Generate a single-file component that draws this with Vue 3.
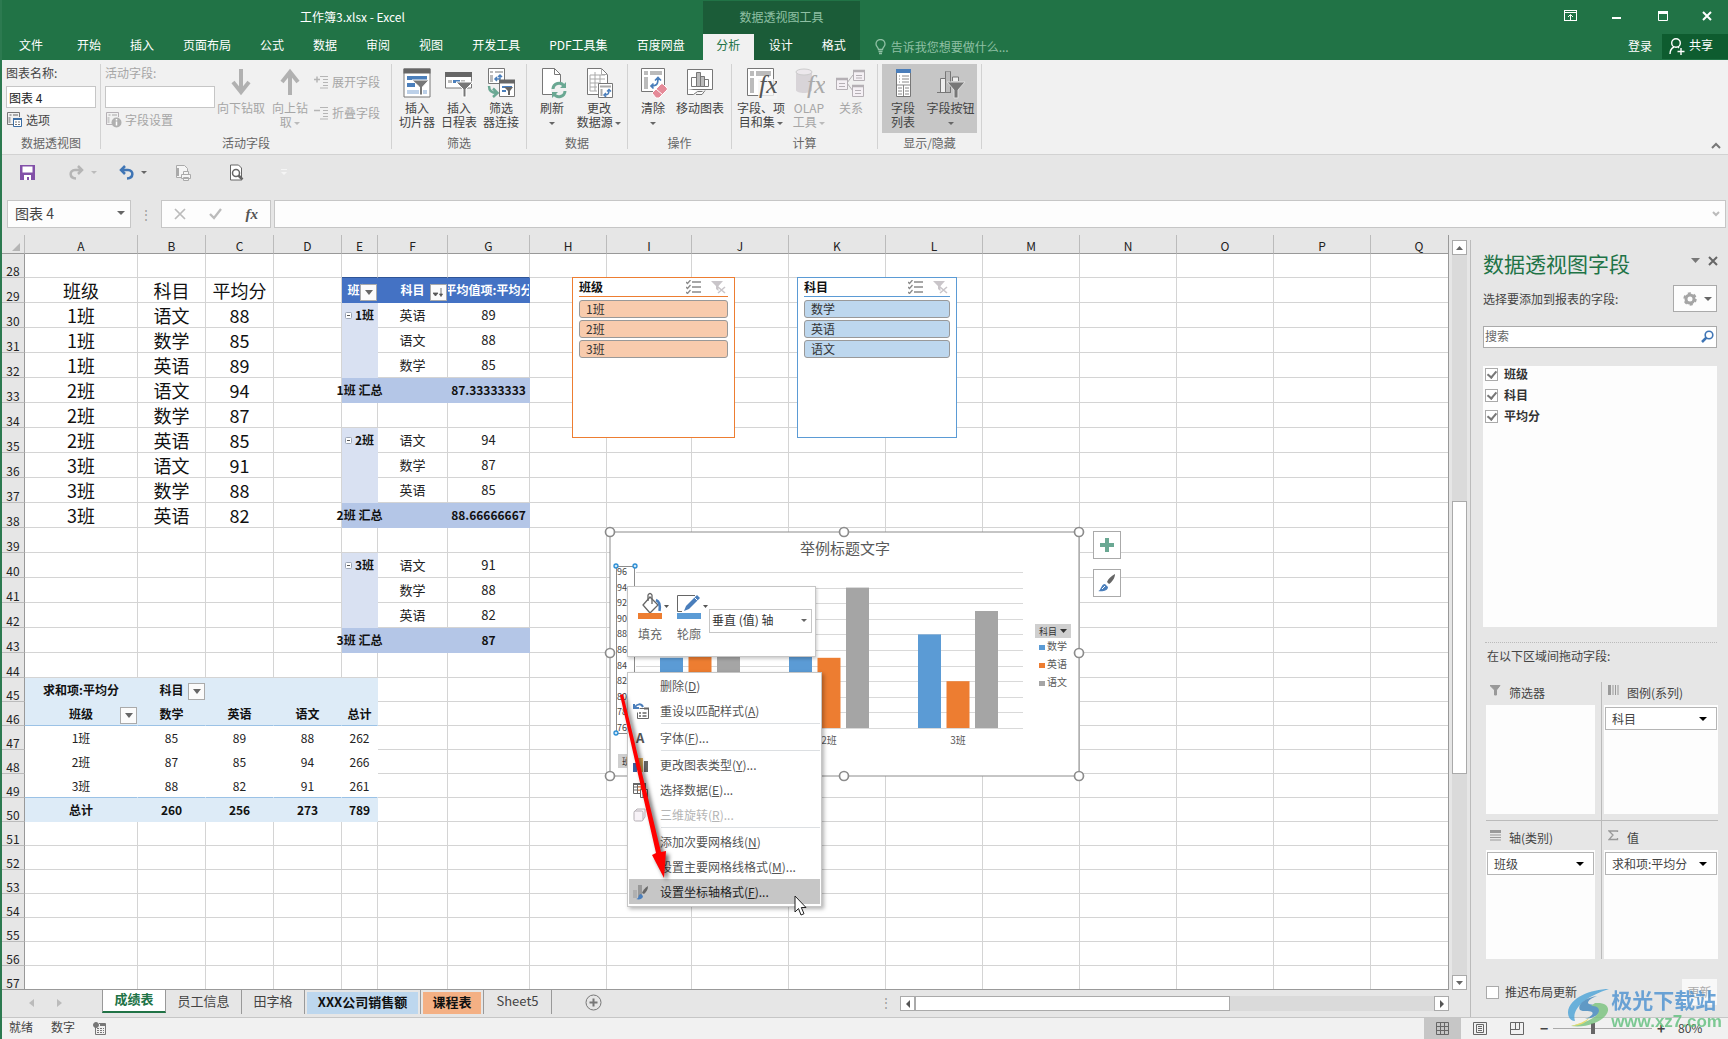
<script setup>
const tabs = ['文件', '开始', '插入', '页面布局', '公式', '数据', '审阅', '视图', '开发工具', 'PDF工具集', '百度网盘']

const columns = [
  ['A', 113], ['B', 68], ['C', 68], ['D', 68], ['E', 36], ['F', 70], ['G', 82], ['H', 77], ['I', 85],
  ['J', 97], ['K', 97], ['L', 97], ['M', 97], ['N', 97], ['O', 97], ['P', 97], ['Q', 97]
]
const gridWidth = 23 + columns.reduce((sum, c) => sum + c[1], 0)

const cells = {}
function put(ref, text, cls = '', extra = {}) {
  cells[ref] = { text, cls, ...extra }
}
function fillRange(cols, row, cls) {
  for (const c of cols) if (!cells[c + row]) put(c + row, '', cls)
}

// Source data
const scores = [
  ['班级', '科目', '平均分'],
  ['1班', '语文', 88], ['1班', '数学', 85], ['1班', '英语', 89],
  ['2班', '语文', 94], ['2班', '数学', 87], ['2班', '英语', 85],
  ['3班', '语文', 91], ['3班', '数学', 88], ['3班', '英语', 82]
]
scores.forEach((line, i) => line.forEach((v, j) => put('ABC'[j] + (29 + i), v, 'src')))

// Pivot with subtotals
put('E29', '班级', 'head clip', { filter: 'drop' })
put('F29', '科目', 'head', { filter: 'sort' })
put('G29', '平均值项:平均分', 'head clip')
for (const c of 'EFG') put(c + 28, '', 'above-head')
const groups = [
  [30, '1班', [['英语', 89], ['语文', 88], ['数学', 85]], '87.33333333'],
  [35, '2班', [['语文', 94], ['数学', 87], ['英语', 85]], '88.66666667'],
  [40, '3班', [['语文', 91], ['数学', 88], ['英语', 82]], '87']
]
for (const [start, name, items, total] of groups) {
  put('E' + start, name, 'outer', { expand: true })
  items.forEach(([subject, value], i) => {
    fillRange('E', start + i, 'outer')
    put('F' + (start + i), subject, 'item')
    put('G' + (start + i), value, 'item')
  })
  const end = start + items.length
  put('E' + end, name + ' 汇总', 'subtotal')
  put('F' + end, '', 'subtotal')
  put('G' + end, total, 'subtotal')
}

// Cross-table pivot
put('A45', '求和项:平均分', 'cross')
put('B45', '科目', 'cross', { filter: 'drop' })
fillRange('CDE', 45, 'cross')
const cross = [
  [46, ['班级', '数学', '英语', '语文', '总计'], 'cross line'],
  [47, ['1班', 85, 89, 88, 262], 'plain'],
  [48, ['2班', 87, 85, 94, 266], 'plain'],
  [49, ['3班', 88, 82, 91, 261], 'plain line'],
  [50, ['总计', 260, 256, 273, 789], 'cross']
]
for (const [row, values, cls] of cross) values.forEach((v, i) => put('ABCDE'[i] + row, v, cls))
cells.A46.filter = 'drop'

const rows = Array.from({ length: 30 }, (_, i) => 28 + i)

const slicers = [
  { title: '班级', cls: 'orange', items: ['1班', '2班', '3班'] },
  { title: '科目', cls: 'blue', items: ['数学', '英语', '语文'] }
]

// Chart geometry
const axis = [96, 94, 92, 90, 88, 86, 84, 82, 80, 78, 76]
const yOf = v => 728 - (v - 76) * 7.8
const bars = []
const series = [
  { name: '数学', color: '#5b9bd5', values: [85, 87, 88] },
  { name: '英语', color: '#ed7d31', values: [89, 85, 82] },
  { name: '语文', color: '#a5a5a5', values: [88, 94, 91] }
]
series.forEach((s, j) => s.values.forEach((v, i) => {
  bars.push({ x: 660 + i * 129 + j * 28.5, y: yOf(v), h: 728 - yOf(v), color: s.color })
}))
const handles = [[610, 532], [844, 532], [1079, 532], [610, 653], [1079, 653], [610, 776], [844, 776], [1079, 776]]
const axisHandles = [[616, 566], [635, 566], [616, 733]]

const menu = [
  { text: '删除', key: 'D' },
  { text: '重设以匹配样式', key: 'A', icon: 'reset' },
  { sep: true },
  { text: '字体', key: 'F', tail: '...', icon: 'font' },
  { sep: true },
  { text: '更改图表类型', key: 'Y', tail: '...', icon: 'chart' },
  { text: '选择数据', key: 'E', tail: '...', icon: 'data' },
  { text: '三维旋转', key: 'R', tail: '...', icon: 'cube', off: true },
  { sep: true },
  { text: '添加次要网格线', key: 'N' },
  { text: '设置主要网格线格式', key: 'M', tail: '...' },
  { text: '设置坐标轴格式', key: 'F', tail: '...', icon: 'format', active: true }
]

const fields = ['班级', '科目', '平均分']
const zones = [
  { title: '筛选器', icon: 'funnel' },
  { title: '图例(系列)', icon: 'cols', field: '科目' },
  { title: '轴(类别)', icon: 'rows', field: '班级' },
  { title: '值', icon: 'sum', field: '求和项:平均分' }
]
</script>

<template>
  <div class="app">
    <header class="top">
      <div class="title-row">
        <div class="doc-title">工作簿3.xlsx - Excel</div>
        <div class="ctx-title">数据透视图工具</div>
        <div class="win-buttons">
          <button aria-label="功能区显示选项"><svg width="14" height="12" viewBox="0 0 14 12" fill="none" stroke="#fff"><rect x="0.5" y="0.5" width="12" height="10" /><path d="M0 2.5h13M6.5 10V5M4 7l2.500-2.500L9 7" /></svg></button>
          <button aria-label="最小化"><svg width="10" height="12" viewBox="0 0 10 12"><path d="M0 7h9v2H0z" fill="#fff" /></svg></button>
          <button aria-label="最大化"><svg width="10" height="12" viewBox="0 0 10 12"><path d="M0.500 1.500h9v9h-9z" fill="none" stroke="#fff" /><path d="M0 1h10v3H0z" fill="#fff" /></svg></button>
          <button aria-label="关闭"><svg width="10" height="10" viewBox="0 0 10 10"><path d="M1 1l8 8M9 1l-8 8" stroke="#fff" stroke-width="2" /></svg></button>
        </div>
      </div>
      <nav class="tab-row">
        <button v-for="t in tabs" :key="t" class="tab" :class="{ file: t === '文件' }">{{ t }}</button>
        <div class="ctx-tabs">
          <button class="tab active">分析</button>
          <button class="tab">设计</button>
          <button class="tab">格式</button>
        </div>
        <div class="tell-me">
          <svg width="11" height="16" viewBox="0 0 11 16" fill="none" stroke="#8fc0a4" stroke-width="1.300"><path d="M3.500 10.500C3.500 8.500 1 7.500 1 5a4.500 4.500 0 0 1 9 0c0 2.500-2.500 3.500-2.500 5.500zM3.500 12.500h4M4 14.500h3" /></svg>
          <span>告诉我您想要做什么...</span>
        </div>
        <button class="login">登录</button>
        <button class="share">
          <svg width="16" height="17" viewBox="0 0 16 17" fill="none" stroke="#fff" stroke-width="1.400"><circle cx="7" cy="5" r="4.300" /><path d="M1 16c0-4 2-6 4-7M9 9l1 1M12 10v7M8.500 13.500h7" /></svg>
          <span>共享</span>
        </button>
      </nav>
    </header>

    <section class="ribbon">
      <div class="group g1">
        <div class="group-body stack">
          <label for="chart-name">图表名称:</label>
          <input id="chart-name" value="图表 4">
          <button class="small">
            <svg width="17" height="17" viewBox="0 0 17 17" fill="none" stroke="#777"><path d="M7 13.500H1.500v-12h12V6" /><path d="M3.500 4h2M7 4h5M3.500 6v6" stroke="#aaa" stroke-width="2" /><path d="M7.500 7.500h8v8h-8z" fill="#fff" stroke="#3c6ea5" /><path d="M7 8h9" stroke="#3c6ea5" stroke-width="2" /><path d="M9 11h2M9 13.500h2M12 11h2M12 13.500h2" /></svg>选项
          </button>
        </div>
        <div class="group-name">数据透视图</div>
      </div>

      <div class="group g2">
        <div class="group-body">
          <div class="stack off">
            <label for="active-field">活动字段:</label>
            <input id="active-field" class="wide" value="">
            <button class="small">
              <svg width="17" height="17" viewBox="0 0 17 17" fill="none" stroke="#b5b0b5"><path d="M7 13.500H1.500v-12h12V6" /><path d="M3.500 4h2M7 4h5M3.500 6v6" stroke="#ccc" stroke-width="2" /><circle cx="11.500" cy="11.500" r="5" fill="#b0b0b0" stroke="none" /><path d="M11.500 8v1.500M11.500 10.500v4" stroke="#fff" stroke-width="1.500" /></svg>字段设置
            </button>
          </div>
          <button class="big w50 off"><svg width="32" height="32" viewBox="0 0 32 32" fill="none" stroke="#b1b1b1" stroke-width="4"><path d="M16 2v23M8 15l8 10 8-10" /></svg><span>向下钻取</span></button>
          <button class="big w48 off"><svg width="32" height="32" viewBox="0 0 32 32" fill="none" stroke="#b1b1b1" stroke-width="4"><path d="M16 28V5M8 15l8-10 8 10" /></svg><span>向上钻</span><span>取 <i class="caret"></i></span></button>
          <div class="pair off">
            <button class="small"><svg width="15" height="14" viewBox="0 0 15 14" stroke="#b5b5b5" fill="none"><path d="M0 4.500h6M3 1.500v6" stroke-width="1.500" /><path d="M6 1.500h8M9 4.500h5M9 7.500h5M9 10.500h5M6 13h8" /></svg>展开字段</button>
            <button class="small"><svg width="15" height="14" viewBox="0 0 15 14" stroke="#b5b5b5" fill="none"><path d="M0 4.500h6" stroke-width="1.500" /><path d="M6 1.500h8M9 4.500h5M9 7.500h5M9 10.500h5M6 13h8" /></svg>折叠字段</button>
          </div>
        </div>
        <div class="group-name">活动字段</div>
      </div>

      <div class="group g3">
        <div class="group-body">
          <button class="big w42"><svg width="32" height="32" viewBox="0 0 32 32" fill="none"><path d="M3 2h26v28H3z" fill="#fff" stroke="#777" /><path d="M2.500 1.500h27v5h-27z" fill="#666" /><path d="M6 9h20v4H6zM6 16h8v4H6z" fill="#4a7ebb" /><path d="M6 23h20v4H6z" fill="#bcd0e8" /><path d="M11 13h17l-6.500 7v8h-3v-8z" fill="#777" stroke="#fff" /></svg><span>插入</span><span>切片器</span></button>
          <button class="big w42"><svg width="32" height="32" viewBox="0 0 32 32" fill="none"><path d="M2.500 6h26v15h-26z" fill="#fff" stroke="#777" /><path d="M2 5h27v5H2z" fill="#666" /><path d="M5 13h4v3H5z" fill="#bbb" /><path d="M10 13h7v3h-7z" fill="#4a7ebb" /><path d="M18 13h4v3h-4z" fill="#bbb" /><path d="M13 15h17l-7 7v8h-3v-8z" fill="#777" stroke="#fff" /></svg><span>插入</span><span>日程表</span></button>
          <button class="big w42"><svg width="32" height="32" viewBox="0 0 32 32" fill="none"><path d="M3.500 1.500h16v15h-16z" fill="#fff" stroke="#777" /><path d="M5 4h3v2H5zM10 4h8v2h-8zM5 8h3v7H5z" fill="#bbb" /><path d="M10 12h5V8m-2 2 2-2 2 2M12 10l-2 2 2 2" stroke="#4a7ebb" stroke-width="1.500" /><path d="M14.500 13.500h15v16h-15z" fill="#fff" stroke="#777" /><path d="M14 12.500h16v4H14z" fill="#666" /><path d="M17 19h10v2H17zM17 23h4v2h-4z" fill="#4a7ebb" /><path d="M19 20h9l-3 4v4h-2v-4z" fill="#666" /><path d="M4 19c0 5 3 7 8 7M8 21.500l4.500 4.500L8 30" stroke="#6aa893" stroke-width="2.500" /></svg><span>筛选</span><span>器连接</span></button>
        </div>
        <div class="group-name">筛选</div>
      </div>

      <div class="group g4">
        <div class="group-body">
          <button class="big w42"><svg width="32" height="32" viewBox="0 0 32 32" fill="none"><path d="M6.500 1.500h12l6 6v20h-18z" fill="#fff" stroke="#777" /><path d="M18.500 1.500v6h6" stroke="#777" /><circle cx="23" cy="23" r="8" fill="#f1f1f1" /><path d="M17 22a6 6 0 0 1 11-3M29 24a6 6 0 0 1-11 3" stroke="#6aa893" stroke-width="3" /><path d="M30 15v6h-6zM16 31v-6h6z" fill="#6aa893" /></svg><span>刷新</span><span><i class="caret"></i></span></button>
          <button class="big w52"><svg width="32" height="32" viewBox="0 0 32 32" fill="none"><path d="M4.500 1.500h14l6 6v20h-20z" fill="#fff" stroke="#777" /><path d="M18.500 1.500v6h6M7 8h15M7 12h15M7 16h9M7 20h7M7 24h7M7 8v16M12 5v19M17 8v8" stroke="#aaa" /><path d="M15.500 16.500h14v14h-14z" fill="#fff" stroke="#777" /><path d="M17 19.500h11M18.500 22v7" stroke="#aaa" stroke-width="2" /><path d="M21 28c4 0 5-1 5-5m-2 1.500 2-2 2 2M23 26l-2 2 2 2" stroke="#4a7ebb" stroke-width="1.500" /></svg><span>更改</span><span>数据源 <i class="caret"></i></span></button>
        </div>
        <div class="group-name">数据</div>
      </div>

      <div class="group g5">
        <div class="group-body">
          <button class="big w42"><svg width="32" height="32" viewBox="0 0 32 32" fill="none"><path d="M4.500 1.500h23v23h-23z" fill="#fff" stroke="#777" /><path d="M7 4h4v4H7zM13 4h12v4H13zM7 10h4v12H7z" fill="#bbb" /><path d="M14 19c6 0 7-2 7-8m-3 2.500 3-3 3 3M16.500 16.500 14 19l2.500 2.500" stroke="#4a7ebb" stroke-width="1.700" /><path d="M15 26l9-9q1-1 2 0l4 4q1 1 0 2l-8 8h-3z" fill="#e58a98" stroke="#fff" /><path d="M19 22l7 6" stroke="#fff" /></svg><span>清除</span><span><i class="caret"></i></span></button>
          <button class="big w52"><svg width="32" height="32" viewBox="0 0 32 32" fill="none"><path d="M3.500 2.500h25v20h-25z" fill="#fff" stroke="#777" /><path d="M7.500 10.500h5v9h-5zM20.500 12.500h4v7h-4z" fill="#fff" stroke="#777" /><path d="M12.500 5.500h4v14h-4zM16.500 9.500h4v10h-4z" fill="#bbb" stroke="#777" /><path d="M3.500 22v5.500h6l4-3h5M12 27.500h6l3-4" stroke="#777" fill="#fff" /></svg><span>移动图表</span></button>
        </div>
        <div class="group-name">操作</div>
      </div>

      <div class="group g6">
        <div class="group-body">
          <button class="big w50"><svg width="32" height="32" viewBox="0 0 32 32" fill="none"><path d="M2.500 1.500h26v27h-26z" fill="#fff" stroke="#777" /><path d="M5 4h4v5H5zM11 4h15v5H11zM5 11h4v15H5z" fill="#bbb" /><path d="M13 12h19v20H13z" fill="#f5f5f5" opacity=".8" /><text x="14" y="26" class="fx" fill="#555">fx</text></svg><span>字段、项</span><span>目和集 <i class="caret"></i></span></button>
          <button class="big w46 off"><svg width="32" height="32" viewBox="0 0 32 32" fill="none"><path d="M3 5v18c0 4 16 4 16 0V5z" fill="#d8d4d8" /><ellipse cx="11" cy="5" rx="8" ry="3" fill="#ece8ec" stroke="#ccc" /><text x="14" y="26" class="fx" fill="#aaa">fx</text></svg><span>OLAP</span><span>工具 <i class="caret"></i></span></button>
          <button class="big w38 off"><svg width="32" height="32" viewBox="0 0 32 32" fill="#f5f0f5" stroke="#b5b0b5"><path d="M12 16l6-8M12 16l6 8" /><path d="M1.500 11.500h11v11h-11zM18.500 3.500h11v10h-11zM17.500 18.500h11v11h-11z" /><path d="M1 12h12M18 4h12M17 19h12" stroke-width="2.500" /><path d="M4 16.500h6M4 19.500h6M21 8.500h6M21 11h6M20 23.500h6M20 26.500h6" /></svg><span>关系</span></button>
        </div>
        <div class="group-name">计算</div>
      </div>

      <div class="group g7">
        <div class="group-body">
          <button class="big w42 on"><svg width="32" height="32" viewBox="0 0 32 32" fill="none"><path d="M9.500 2.500h14v27h-14z" fill="#fff" stroke="#777" /><path d="M9 2h15v4H9z" fill="#4a7ebb" /><path d="M12 9h1M15 9h7M12 12h1M15 12h7M12 15h1M15 15h7M10 18h13M16.500 18v11M11 21h4M18 21h4M11 24h4M18 24h4M11 27h4M18 27h4" stroke="#888" /></svg><span>字段</span><span>列表</span></button>
          <button class="big w53 on"><svg width="32" height="32" viewBox="0 0 32 32" fill="none"><path d="M2 25.500h14M5.500 25V11.500h5V25M10.500 25V4.500h5V25M17.500 14v-4h6v4" stroke="#777" fill="#eee" /><path d="M11 4.500h4V25h-4z" fill="#bbb" /><path d="M12 15h18l-7 8v8h-4v-8z" fill="#777" stroke="#ddd" /></svg><span>字段按钮</span><span><i class="caret"></i></span></button>
        </div>
        <div class="group-name">显示/隐藏</div>
      </div>
      <button class="collapse" aria-label="折叠功能区"><svg width="10" height="7" viewBox="0 0 10 7"><path d="M1 6l4-4 4 4" fill="none" stroke="#777" stroke-width="2" /></svg></button>
    </section>

    <section class="qat">
      <button aria-label="保存"><svg width="15" height="15" viewBox="0 0 15 15"><path d="M0 0h15v15H0z" fill="#8250a8" /><path d="M2.500 1.500h10v6h-10zM4 10h7v5H9v-3H7v3H4z" fill="#fff" /></svg></button>
      <button aria-label="重做" class="redo"><svg width="15" height="15" viewBox="0 0 15 15" fill="none" stroke="#b5b5b5" stroke-width="2.500"><path d="M13 5H6C0 5 0 13 7 13.500M9 1l4 4-4 4" /></svg><i class="caret pale"></i></button>
      <button aria-label="撤消" class="undo"><svg width="15" height="15" viewBox="0 0 15 15" fill="none" stroke="#3f75b5" stroke-width="2.500"><path d="M2 5h7c6 0 6 8-1 8.500M6 1L2 5l4 4" /></svg><i class="caret"></i></button>
      <button aria-label="快速打印"><svg width="17" height="17" viewBox="0 0 17 17" fill="#f5f5f5" stroke="#aaa"><path d="M1.500 1.500h8l3 3v9h-11z" /><path d="M3 4v8" stroke-width="2" /><path d="M8.500 7.500h5v3h-5zM6.500 10.500h9v4h-9zM8.500 13.500h5v3h-5z" /></svg></button>
      <button aria-label="打印预览" class="preview"><svg width="15" height="17" viewBox="0 0 15 17" fill="#fff" stroke="#666"><path d="M1.500 1h8l3 3v12h-11z" /><circle cx="7" cy="9" r="3.500" stroke-width="1.500" /><path d="M9.500 11.500l4 4" stroke-width="2.500" /></svg></button>
      <button aria-label="自定义快速访问工具栏" class="preview"><svg width="7" height="7" viewBox="0 0 7 7" fill="#f5f5f5"><path d="M0 0h6v1H0zM0 3h6L3 6z" /></svg></button>
    </section>

    <section class="formula-bar">
      <div class="name-box"><input aria-label="名称框" value="图表 4"><i class="caret big-caret"></i></div>
      <span class="dots">⋮</span>
      <div class="fx-box">
        <svg width="12" height="12" viewBox="0 0 12 12"><path d="M1 1l10 10M11 1L1 11" stroke="#bbb" stroke-width="1.700" /></svg>
        <svg width="13" height="12" viewBox="0 0 13 12"><path d="M1 6l4 4 7-9" stroke="#bbb" stroke-width="2.300" fill="none" /></svg>
        <button class="fx-btn" aria-label="插入函数">fx</button>
      </div>
      <div class="formula"><input aria-label="编辑栏" value=""><svg width="8" height="6" viewBox="0 0 8 6"><path d="M1 1l3 3 3-3" fill="none" stroke="#bbb" stroke-width="2" /></svg></div>
    </section>

    <main class="work">
      <div class="left">
        <div class="sheet-row">
          <div class="sheet">
            <table class="grid" :style="{ width: gridWidth + 'px' }">
              <colgroup><col class="col-head"><col v-for="c in columns" :key="c[0]" :style="{ width: c[1] + 'px' }"></colgroup>
              <thead>
                <tr><th class="corner"><svg width="8" height="8" viewBox="0 0 8 8"><path d="M8 0v8H0z" fill="#b5b5b5" /></svg></th><th v-for="c in columns" :key="c[0]">{{ c[0] }}</th></tr>
              </thead>
              <tbody>
                <tr v-for="r in rows" :key="r" :class="{ tall: r > 28 && r < 45 }">
                  <th scope="row">{{ r }}</th>
                  <td v-for="c in columns" :key="c[0]" :class="cells[c[0] + r]?.cls">
                    <div class="c">
                      <template v-if="cells[c[0] + r]">
                        <svg v-if="cells[c[0] + r].expand" class="expand" width="7" height="7" viewBox="0 0 7 7"><rect x="0.500" y="0.500" width="6" height="6" rx="1" fill="#fff" stroke="#9aa4b4" /><path d="M2 3.500h3" stroke="#555" /></svg>{{ cells[c[0] + r].text }}<button v-if="cells[c[0] + r].filter" class="filter" aria-label="筛选"><svg v-if="cells[c[0] + r].filter === 'drop'" width="8" height="5" viewBox="0 0 8 5"><path d="M0 0h8L4 5z" fill="#666" /></svg><svg v-else width="11" height="10" viewBox="0 0 11 10"><path d="M0 5h5L2.500 8zM8 0v6M6.500 6L8 8.500 9.500 6z" fill="#555" stroke="#555" stroke-width=".8" /></svg></button>
                      </template>
                    </div>
                  </td>
                </tr>
              </tbody>
            </table>

            <div v-for="s in slicers" :key="s.title" class="slicer" :class="s.cls">
              <div class="slicer-head">
                <span>{{ s.title }}</span>
                <svg width="15" height="14" viewBox="0 0 15 14" fill="none" stroke="#8a8a8a" stroke-width="1.300"><path d="M0 2l1.500 1.500L4.500 0M0 7l1.500 1.500L4.500 5M0 12l1.500 1.500L4.500 10M6 2h9M6 7h9M6 12h9" /></svg>
                <svg width="15" height="14" viewBox="0 0 15 14"><path d="M0 1h12L7.500 6v5L5 9V6z" fill="#c9c5c9" /><path d="M7 7l7 6M14 7l-7 6" stroke="#c9c5c9" stroke-width="1.600" /></svg>
              </div>
              <button v-for="i in s.items" :key="i">{{ i }}</button>
            </div>

            <svg class="chart" width="486" height="265" viewBox="602 520 486 265">
              <rect x="610" y="532" width="469" height="244" fill="#fff" stroke="#8c8c8c" />
              <text x="845" y="554" class="chart-title">举例标题文字</text>
              <path v-for="v in axis" :key="v" :d="`M636 ${Math.round(yOf(v)) + 0.5}H1023`" stroke="#d9d9d9" />
              <text v-for="v in axis" :key="'t' + v" x="617" :y="yOf(v) + 3" class="axis">{{ v }}</text>
              <rect v-for="(b, i) in bars" :key="'b' + i" :x="b.x" :y="b.y" width="23" :height="b.h" :fill="b.color" />
              <text x="829" y="744" class="cat">2班</text>
              <text x="958" y="744" class="cat">3班</text>
              <rect x="1035" y="624" width="36" height="14" fill="#cfcfcf" />
              <text x="1039" y="635" class="tag">科目</text>
              <path d="M1060 629h7l-3.500 4z" fill="#333" />
              <g v-for="(s, i) in series" :key="s.name">
                <rect x="1039" :y="645 + i * 18" width="6" height="5" :fill="s.color" />
                <text x="1047" :y="650 + i * 18" class="legend">{{ s.name }}</text>
              </g>
              <rect x="618" y="754" width="36" height="14" fill="#cfcfcf" />
              <text x="622" y="765" class="tag">班级</text>
              <rect x="616.500" y="566.500" width="18" height="167" fill="none" stroke="#8c8c8c" />
              <circle v-for="(h, i) in axisHandles" :key="'a' + i" :cx="h[0]" :cy="h[1]" r="2" fill="#cde6f7" stroke="#2a8dd4" stroke-width="1.300" />
              <circle v-for="(h, i) in handles" :key="'h' + i" :cx="h[0]" :cy="h[1]" r="4.500" fill="#fff" stroke="#8c8c8c" stroke-width="1.700" />
            </svg>

            <div class="chart-tools">
              <button aria-label="图表元素"><svg width="14" height="14" viewBox="0 0 14 14"><path d="M5 0h4v5h5v4H9v5H5V9H0V5h5z" fill="#6aa893" /></svg></button>
              <button aria-label="图表样式"><svg width="18" height="18" viewBox="0 0 18 18"><path d="M17 0c-4 2-7 5-8 8l2 2c3-2 6-6 6-10z" fill="#666" /><path d="M0 17c3 0 3-7 7-7l3 3c0 4-6 5-10 4z" fill="#4a7ebb" /><path d="M4 15l3-3" stroke="#fff" /></svg></button>
            </div>

            <div class="mini-bar">
              <button><svg width="34" height="28" viewBox="0 0 34 28" fill="none"><path d="M12 5l8 8-8 8-7-8z" fill="#fff" stroke="#666" stroke-width="1.300" /><path d="M10 9V3q2-3 4 0v9" stroke="#666" stroke-width="1.300" /><path d="M18 8q5 2 3.500 11" stroke="#4a7ebb" stroke-width="2.500" /><path d="M0 21h24v6H0z" fill="#ed7d31" /><path d="M26 13h5l-2.500 3z" fill="#555" /></svg><span>填充</span></button>
              <button><svg width="34" height="28" viewBox="0 0 34 28" fill="none"><path d="M18 3.500H.5v16H5" stroke="#666" /><path d="M7 19l2-5L20 3l3 3-11 11z" fill="#4a7ebb" /><path d="M17.500 5.500l3 3" stroke="#fff" /><path d="M0 21h24v6H0z" fill="#5b9bd5" /><path d="M26 13h5l-2.500 3z" fill="#555" /></svg><span>轮廓</span></button>
              <div class="element"><select aria-label="图表元素"><option>垂直 (值) 轴</option></select><i class="caret"></i></div>
            </div>

            <div class="menu" role="menu">
              <template v-for="(m, i) in menu" :key="i">
                <hr v-if="m.sep">
                <button v-else role="menuitem" :class="{ active: m.active, dim: m.off }">
                  <span class="mi">
                    <svg v-if="m.icon === 'reset'" width="16" height="16" viewBox="0 0 16 16" fill="none"><path d="M6.500 5.500h9v10h-11v-6" stroke="#666" /><path d="M11 5.500h5" stroke="#666" stroke-width="2" /><path d="M6 10h2M9.500 10h4M6 13h2M9.500 13h4" stroke="#666" stroke-width="1.300" /><path d="M10 4C8 0 4 1 2 4M1 1v4h5" stroke="#4a7ebb" stroke-width="2" /></svg>
                    <b v-else-if="m.icon === 'font'">A</b>
                    <svg v-else-if="m.icon === 'chart'" width="16" height="16" viewBox="0 0 16 16"><path d="M0 6h4v9H0z" fill="#3c5fa0" /><path d="M5 1h5v14H5z" fill="#e5b35c" /><path d="M11 4h4v11h-4z" fill="#666" /></svg>
                    <svg v-else-if="m.icon === 'data'" width="16" height="16" viewBox="0 0 16 16" fill="#fff" stroke="#666"><path d="M.5 1.500h12v10H.5zM.5 5h12M.5 8h12M4.500 1.500v10M8.500 1.500v10" /><path d="M0 2h13" stroke-width="2" /><path d="M5 5h3v3H5" stroke="#ed7d31" /><path d="M7.500 7.500h7v8h-7zM10 11v4M12.500 10v5" /></svg>
                    <svg v-else-if="m.icon === 'cube'" width="14" height="14" viewBox="0 0 14 14" fill="#f7f2f7" stroke="#b5b0b5"><path d="M1 4l3-3h8v8l-3 4" /><rect x="1" y="3" width="9" height="10" rx="1.500" /></svg>
                    <svg v-else-if="m.icon === 'format'" width="16" height="16" viewBox="0 0 16 16"><path d="M0 6h4v8H0z" fill="#b0b0b0" /><path d="M5 1h4v12H5z" fill="#999" /><path d="M15 2c-3 2-5 4-6 7l2 1c2-2 4-4 4-8z" fill="#666" /><path d="M3 15c3 0 2-5 5-5l2 2c0 3-4 4-7 3z" fill="#4a7ebb" /></svg>
                  </span>
                  <span>{{ m.text }}(<u>{{ m.key }}</u>){{ m.tail }}</span>
                </button>
              </template>
            </div>

            <svg class="arrow" width="70" height="200" viewBox="0 0 70 200"><path d="M10 7L13 6 51 164 56 163 54 190 42 167 46 165z" fill="#f00" /></svg>
            <svg class="cursor" width="14" height="21" viewBox="0 0 14 21"><path d="M1 1v16l3.500-3.500L7 20l3-1.300L7.300 12.500H12z" fill="#fff" stroke="#222" /></svg>
          </div>

          <div class="vscroll">
            <button aria-label="向上滚动"><svg width="7" height="4" viewBox="0 0 7 4"><path d="M0 4h7L3.500 0z" fill="#666" /></svg></button>
            <div class="track"><div class="thumb"></div></div>
            <button aria-label="向下滚动"><svg width="7" height="4" viewBox="0 0 7 4"><path d="M0 0h7L3.500 4z" fill="#666" /></svg></button>
          </div>
        </div>

        <div class="sheet-tabs">
          <div class="nav"><svg width="5" height="8" viewBox="0 0 5 8"><path d="M5 0v8L0 4z" fill="#bbb" /></svg><svg width="5" height="8" viewBox="0 0 5 8"><path d="M0 0v8l5-4z" fill="#bbb" /></svg></div>
          <button class="st current">成绩表</button>
          <button class="st w76">员工信息</button>
          <button class="st w63">田字格</button>
          <button class="st w116"><span class="tint-blue">XXX公司销售额</span></button>
          <button class="st w63"><span class="tint-orange">课程表</span></button>
          <button class="st w68">Sheet5</button>
          <button class="add" aria-label="新工作表"><svg width="17" height="17" viewBox="0 0 17 17" fill="none" stroke="#777"><circle cx="8.500" cy="8.500" r="7.500" /><path d="M8.500 4.500v8M4.500 8.500h8" stroke-width="2" /></svg></button>
          <span class="grip">⋮</span>
          <div class="hscroll">
            <button aria-label="向左滚动"><svg width="4" height="8" viewBox="0 0 4 8"><path d="M4 0v8L0 4z" fill="#555" /></svg></button>
            <div class="track"><div class="thumb"></div></div>
            <button aria-label="向右滚动"><svg width="4" height="8" viewBox="0 0 4 8"><path d="M0 0v8l4-4z" fill="#555" /></svg></button>
          </div>
        </div>
      </div>

      <aside class="panel">
        <div class="panel-title">
          <h2>数据透视图字段</h2>
          <svg width="9" height="5" viewBox="0 0 9 5"><path d="M0 0h9L4.500 5z" fill="#777" /></svg>
          <button aria-label="关闭窗格"><svg width="10" height="10" viewBox="0 0 10 10"><path d="M1 1l8 8M9 1L1 9" stroke="#666" stroke-width="2" /></svg></button>
        </div>
        <div class="choose">
          <span>选择要添加到报表的字段:</span>
          <button class="gear" aria-label="工具"><svg width="14" height="14" viewBox="0 0 14 14" fill="none" stroke="#a5a5a5"><circle cx="7" cy="7" r="4" stroke-width="3" /><circle cx="7" cy="7" r="5.700" stroke-width="2" stroke-dasharray="3 3" /></svg><i class="caret big-caret"></i></button>
        </div>
        <div class="search"><input aria-label="搜索" placeholder="搜索"><svg width="13" height="13" viewBox="0 0 13 13" fill="none" stroke="#3f75b5"><circle cx="8" cy="5" r="3.800" stroke-width="1.600" /><path d="M5.500 7.500L1 12" stroke-width="2.500" /></svg></div>
        <div class="field-list">
          <label v-for="f in fields" :key="f"><input type="checkbox" checked><span>{{ f }}</span></label>
        </div>
        <div class="drag-title">在以下区域间拖动字段:</div>
        <div class="zones">
          <div v-for="z in zones" :key="z.title" class="zone">
            <div class="zone-head">
              <svg width="11" height="11" viewBox="0 0 11 11" fill="#999" stroke="#999"><path v-if="z.icon === 'funnel'" d="M0 .5h10L6.500 5v5h-2V5z" /><path v-if="z.icon === 'cols'" d="M.5 0v10M1.500 0v10M2.500 0v10M5 0v10M7.500 0v10M10 0v10" /><path v-if="z.icon === 'rows'" d="M0 .5h11M0 1.500h11M0 2.500h11M0 5h11M0 7.500h11M0 10h11" /><path v-if="z.icon === 'sum'" d="M9.500 2V1H1l4 4-4 4.500h8.500V8" fill="none" stroke-width="1.300" /></svg>
              <span>{{ z.title }}</span>
            </div>
            <div class="zone-box"><button v-if="z.field"><span>{{ z.field }}</span><svg width="8" height="4" viewBox="0 0 8 4"><path d="M0 0h8L4 4z" /></svg></button></div>
          </div>
        </div>
        <div class="defer">
          <label><input type="checkbox"><span>推迟布局更新</span></label>
          <button disabled>更新</button>
        </div>
      </aside>
    </main>

    <footer class="status">
      <span>就绪</span><span>数字</span>
      <svg width="13" height="13" viewBox="0 0 13 13" fill="none" stroke="#777"><path d="M2.500 5v7.500h10v-11H6" /><circle cx="3" cy="3" r="2.500" fill="#777" /><path d="M7 3h5" stroke-width="2" /><path d="M4 6.500h7M4 8.500h7M4 10.500h7" stroke-dasharray="2 1" /></svg>
      <div class="views">
        <button class="on" aria-label="普通"><svg width="13" height="13" viewBox="0 0 13 13" fill="none" stroke="#666"><path d="M.5.5h12v12H.5zM.5 4.500h12M.5 8.500h12M4.500.5v12M8.500.5v12" /></svg></button>
        <button aria-label="页面布局"><svg width="14" height="13" viewBox="0 0 14 13" fill="none" stroke="#666"><path d="M.5.5h13v12H.5zM3.500 2.500h7v8h-7zM5 4.500h4M5 6.500h4M5 8.500h4" /></svg></button>
        <button aria-label="分页预览"><svg width="14" height="13" viewBox="0 0 14 13" fill="none" stroke="#666"><path d="M.5.5h13v12H.5zM5.500.5v7M9.500.5v7h-9" /></svg></button>
      </div>
      <div class="zoom"><b>−</b><div class="zoom-track"><i></i></div><b>+</b><span>80%</span></div>
    </footer>

    <div class="mark">
      <svg width="42" height="40" viewBox="0 0 42 40"><path d="M42 1C24 1 2 10 1 24c0 6 3 9 7 9C4 20 20 8 42 1z" fill="#4ba3d8" /><path d="M30 8C16 10 10 18 13 22c3 2 9 0 12 2 2 2-1 5-7 7 10-1 18-6 15-12-3-4-11-1-12-4 0-3 4-5 9-7z" fill="#3f86bd" /><path d="M28 15c12-1 16 5 11 12C33 35 18 40 4 38c14-3 26-8 28-15 0-4-3-5-8-5z" fill="#79c37d" /><path d="M4 38c10 0 16-4 19-9-5 5-12 7-19 9z" fill="#e6d84e" /></svg>
      <div><div class="mark-name">极光下载站</div><div class="mark-url">www.xz7.com</div></div>
    </div>
  </div>
</template>

<style>
body { margin: 0; }
</style>

<style scoped>
* { box-sizing: border-box; }
.app {
  position: relative; display: flex; flex-direction: column; min-height: 100vh;
  border-left: 2px solid #2c7a50; background: #e6e6e6; color: #444; overflow: hidden;
  font: 12px/16px "Noto Sans CJK SC", "Noto Sans", sans-serif;
}
button, input, select { font: inherit; color: inherit; margin: 0; padding: 0; border: 0; background: none; border-radius: 0; outline: 0; }
svg { display: block; flex: none; }
.caret { display: inline-block; width: 0; height: 0; border: 3px solid transparent; border-top-color: #666; border-bottom: 0; vertical-align: middle; flex: none; }
.caret.big-caret { border-width: 4px 4px 0; }
.pale { border-top-color: #bbb; }
.off .caret { border-top-color: #bbb; }

.top { background: #217346; color: #fff; }
.title-row, .tab-row { display: flex; }
.title-row { height: 34px; }
.doc-title { width: 701px; text-align: center; line-height: 34px; }
.ctx-title { width: 157px; margin-top: 1px; background: #1b5c38; color: #8fc0a4; text-align: center; line-height: 32px; }
.win-buttons { display: flex; margin-left: auto; height: 32px; }
.win-buttons button { width: 46px; display: flex; align-items: center; justify-content: center; }
.win-buttons button:last-child { width: 42px; }
.tab-row { height: 26px; }
.tab { padding: 0 14px 4px 15px; white-space: nowrap; }
.tab.file { padding: 0 19px 4px 17px; }
.ctx-tabs { width: 157px; margin-left: 4px; display: flex; background: #1b5c38; }
.ctx-tabs .tab.active { width: 51px; padding: 0 0 4px; background: #f1f1f1; color: #217346; }
.tell-me { display: flex; align-items: center; gap: 5px; margin-left: 15px; color: #8fc0a4; }
.login { margin-left: auto; padding: 0 10px 2px; }
.share { display: flex; align-items: center; gap: 4px; width: 66px; padding-left: 7px; height: 25px; background: #0e5c2f; }
.share span { padding-bottom: 4px; }

.ribbon { display: flex; height: 95px; background: #f1f1f1; border-bottom: 1px solid #d2d2d2; }
.group { margin: 4px 0 5px; border-right: 1px solid #d2d2d2; display: flex; flex-direction: column; justify-content: space-between; }
.group-body { display: flex; }
.group-name { text-align: center; color: #666; line-height: 12px; }
.g1 { width: 99px; }
.g2 { width: 291px; }
.g2 .stack { padding-right: 1px; }
.g3 { width: 135px; }
.g4 { width: 101px; }
.g5 { width: 104px; }
.g6 { width: 146px; }
.g7 { width: 104px; }
.g3 .group-body, .g4 .group-body, .g5 .group-body, .g6 .group-body, .g7 .group-body { padding-left: 4px; }
.stack { display: flex; flex-direction: column; align-items: flex-start; padding: 1px 0 0 4px; }
.stack input { width: 90px; height: 22px; margin: 5px 0 3px; padding: 0 2px; background: #fff; border: 1px solid #c6c6c6; color: #222; }
.stack input.wide { width: 110px; }
.small { display: flex; align-items: center; gap: 3px; white-space: nowrap; }
.off { color: #a6a6a6; }
.pair { display: flex; flex-direction: column; gap: 15px; padding-top: 10px; }
.big { display: flex; flex-direction: column; align-items: center; height: 69px; padding-top: 3px; line-height: 14px; white-space: nowrap; }
.big svg { margin-bottom: 2px; }
.big span { height: 14px; }
.w38 { width: 38px; } .w42 { width: 42px; } .w46 { width: 46px; } .w48 { width: 48px; }
.w50 { width: 50px; } .w52 { width: 52px; } .w53 { width: 53px; }
.on { background: #c6c6c6; }
.fx { font: italic 26px "Liberation Serif", serif; }
.collapse { margin: auto 7px 5px auto; }

.qat { display: flex; align-items: center; height: 45px; padding: 0 0 11px 18px; gap: 28px; }
.qat button { display: flex; align-items: center; gap: 7px; }
.qat .redo { margin-left: 6px; }
.qat .undo { margin-left: -6px; }
.qat .preview { margin-left: 9px; }

.formula-bar { display: flex; padding: 0 2px 7px 5px; height: 35px; }
.name-box, .fx-box, .formula { display: flex; align-items: center; background: #fdfdfd; border: 1px solid #c6c6c6; }
.name-box { width: 124px; padding: 0 5px 2px 7px; font-size: 14px; }
.name-box input { flex: 1; min-width: 0; }
.dots { width: 30px; text-align: center; line-height: 28px; color: #999; }
.fx-box { width: 110px; justify-content: space-between; padding: 0 12px; margin-right: 3px; }
.fx-btn { font: italic bold 15px/16px "Liberation Serif", serif; color: #555; }
.formula { flex: 1; padding-right: 5px; }
.formula input { flex: 1; }

.work { display: flex; flex: 1; }
.left { flex: 1; min-width: 0; display: flex; flex-direction: column; }
.sheet-row { display: flex; flex: 1; }
.sheet { position: relative; flex: 1; min-width: 0; overflow: hidden; border-bottom: 1px solid #999; border-right: 1px solid #999; background: linear-gradient(#e6e6e6 19px, #fff 19px); }
.grid { table-layout: fixed; border-collapse: separate; border-spacing: 0; margin-bottom: -1px; color: #222; }
.col-head { width: 23px; }
.grid th, .grid td { padding: 0; font-weight: normal; }
.grid thead th { height: 19px; background: #e6e6e6; border-bottom: 1px solid #999; border-right: 1px solid #bbb; line-height: 14px; vertical-align: bottom; }
.corner svg { margin: 0 4px 2px auto; }
.grid tbody th { background: #e6e6e6; border-bottom: 1px solid #bbb; border-right: 1px solid #999; line-height: 12px; vertical-align: bottom; }
.grid td { border-right: 1px solid #d4d4d4; border-bottom: 1px solid #d4d4d4; }
.c { position: relative; display: flex; align-items: center; justify-content: center; height: 23px; white-space: nowrap; }
.tall .c { height: 24px; }
.src { font-size: 18px; color: #111; }
.grid td.above-head { border-bottom-color: #2f5597; }
.grid td.head { background: #4472c4; border-color: #4472c4; color: #fff; font-weight: bold; }
.clip .c { overflow: hidden; }
.grid td.outer { background: #d9e1f2; border-color: #d9e1f2; font-weight: bold; color: #111; }
.expand { margin-right: 3px; }
.grid td.item { font-size: 13px; }
.grid td.subtotal { background: #b4c6e7; border-color: #b4c6e7; font-weight: bold; color: #111; }
.grid td.cross { background: #ddebf7; border-color: #ddebf7; font-weight: bold; color: #111; }
.grid td.plain { border-color: #fff; }
.grid td.line { border-bottom-color: #9bc2e6; }
.filter { position: absolute; right: 0; bottom: 1px; width: 17px; height: 17px; display: flex; align-items: center; justify-content: center; background: #fbfbfb; border: 1px solid #aaa; }

.slicer { position: absolute; top: 42px; width: 163px; height: 161px; padding: 0 6px; background: #fff; border: 1px solid #ed7d31; display: flex; flex-direction: column; gap: 2px; color: #333; }
.slicer.orange { left: 570px; }
.slicer.blue { left: 795px; width: 160px; border-color: #5b9bd5; }
.slicer-head { display: flex; align-items: center; gap: 10px; height: 19px; margin-bottom: 1px; padding: 0 2px 1px 0; border-bottom: 1px solid #ed7d31; font-weight: bold; color: #111; }
.blue .slicer-head { border-color: #5b9bd5; }
.slicer-head span { flex: 1; }
.slicer button { height: 18px; text-align: left; padding-left: 6px; line-height: 14px; background: #f8cbad; border: 1px solid #999; border-radius: 3px; }
.slicer.blue button { background: #bdd7ee; }

.chart { position: absolute; left: 600px; top: 285px; }
.chart-title { font-size: 15px; fill: #595959; text-anchor: middle; }
.axis { font-size: 9px; fill: #444; }
.cat { font-size: 10px; fill: #595959; text-anchor: middle; }
.tag { font-size: 9px; fill: #333; }
.legend { font-size: 10px; fill: #595959; }
.chart-tools { position: absolute; left: 1091px; top: 296px; display: flex; flex-direction: column; gap: 10px; }
.chart-tools button { width: 28px; height: 28px; display: flex; align-items: center; justify-content: center; background: #fff; border: 1px solid #aaa; }

.mini-bar { position: absolute; left: 625px; top: 351px; width: 189px; height: 71px; padding: 5px 3px 0 10px; background: #fff; border: 1px solid #c6c6c6; box-shadow: 1px 2px 3px rgba(0, 0, 0, .2); display: flex; align-items: flex-start; gap: 5px; color: #666; }
.mini-bar button { width: 34px; text-align: left; }
.mini-bar button span { display: block; margin-top: 6px; }
.element { position: relative; flex: 1; margin: 17px 0 0 -7px; }
.element select { appearance: none; width: 100%; height: 24px; padding: 0 2px 2px; border: 1px solid #c6c6c6; background: #fff; color: #333; }
.element .caret { position: absolute; right: 5px; top: 10px; pointer-events: none; }

.menu { position: absolute; left: 625px; top: 437px; width: 195px; padding: 0 1px 2px; background: #fff; border: 1px solid #c6c6c6; box-shadow: 2px 2px 4px rgba(0, 0, 0, .3); display: flex; flex-direction: column; }
.menu button { display: flex; align-items: center; height: 25px; text-align: left; color: #555; white-space: nowrap; }
.menu button.active { background: #c6c6c6; color: #222; }
.menu button.dim { color: #b5b5b5; }
.mi { width: 31px; padding-left: 4px; font-size: 13px; text-indent: 3px; }
.menu hr { margin: 0 0 1px 32px; border: 0; border-top: 1px solid #dcdfe2; }
.arrow { position: absolute; left: 608px; top: 453px; filter: drop-shadow(3px 3px 2px rgba(0, 0, 0, .6)); }
.cursor { position: absolute; left: 792px; top: 660px; }

.vscroll { width: 15px; margin: 5px 3px 0; display: flex; flex-direction: column; }
.vscroll button, .hscroll button { flex: none; width: 15px; height: 15px; display: flex; align-items: center; justify-content: center; background: #fff; border: 1px solid #aaa; }
.track { flex: 1; background: #dadada; display: flex; }
.vscroll .track { flex-direction: column; }
.vscroll .thumb { margin-top: 246px; height: 273px; background: #fff; border: 1px solid #aaa; }

.sheet-tabs { display: flex; align-items: flex-start; height: 27px; padding-right: 21px; }
.nav { width: 100px; display: flex; gap: 23px; padding: 9px 0 0 27px; }
.st { height: 24px; padding-bottom: 2px; border-right: 1px solid #999; white-space: nowrap; flex: none; font-size: 13px; }
.st.current { width: 64px; margin-top: -1px; border-left: 1px solid #999; background: #fff; color: #217346; font-weight: bold; border-bottom: 2px solid #217346; }
.w76 { width: 76px; } .w63 { width: 63px; } .w116 { width: 116px; } .w68 { width: 68px; }
.tint-blue, .tint-orange { display: block; margin: 2px 2px 0; line-height: 20px; padding-bottom: 2px; background: #bdd7ee; color: #111; font-weight: bold; }
.tint-orange { background: #f4b084; }
.add { margin: 4px 0 0 33px; }
.grip { margin: 4px 0 0 auto; width: 8px; color: #999; }
.hscroll { display: flex; width: 549px; margin: 6px 0 0 12px; }
.hscroll .track { height: 15px; }
.hscroll .thumb { width: 315px; background: #fff; border: 1px solid #aaa; }

.panel { width: 258px; margin-top: 5px; padding: 10px 11px 0 12px; border-left: 1px solid #bbb; }
.panel-title { display: flex; align-items: flex-start; }
.panel-title h2 { flex: 1; margin: 0; font-size: 21px; line-height: 26px; font-weight: normal; color: #217346; }
.panel-title svg { margin-top: 8px; }
.panel-title button { margin: -2px -1px 0 8px; }
.choose { display: flex; align-items: center; justify-content: space-between; margin-top: 9px; }
.gear { width: 44px; height: 27px; display: flex; align-items: center; justify-content: space-between; padding: 0 4px 0 9px; background: #fdfdfd; border: 1px solid #aaa; }
.search { display: flex; align-items: center; height: 22px; margin-top: 14px; padding: 0 2px 2px 1px; background: #fff; border: 1px solid #aaa; }
.search input { flex: 1; min-width: 0; }
.search input::placeholder { color: #666; opacity: 1; }
.field-list { height: 261px; margin-top: 18px; padding: 0 2px; background: #fdfdfd; display: flex; flex-direction: column; gap: 5px; font-weight: bold; color: #333; }
.field-list label, .defer label { display: flex; align-items: center; gap: 6px; }
input[type="checkbox"] { appearance: none; width: 13px; height: 13px; border: 1px solid #aaa; background: #fff; }
input[type="checkbox"]:checked::after { content: ""; display: block; width: 4px; height: 7px; margin: 0 0 0 3px; border: solid #777; border-width: 0 2px 2px 0; transform: rotate(40deg); }
.drag-title { margin: 15px 0 0 2px; padding: 5px 2px 0; border-top: 1px dotted #bbb; }
.zones { display: grid; grid-template-columns: 116px 1fr; margin: 18px 0 0 3px; }
.zone:nth-child(odd) { border-right: 1px solid #bbb; padding-right: 6px; }
.zone:nth-child(even) { padding-left: 2px; margin-right: -1px; }
.zone:nth-child(-n+2) { border-bottom: 1px solid #bbb; padding-bottom: 6px; }
.zone:nth-child(n+3) { padding-top: 6px; }
.zone-head { display: flex; align-items: center; gap: 8px; height: 23px; padding: 0 0 6px 4px; }
.zone-head span { padding-top: 4px; }
.zone-box { height: 109px; padding: 2px 1px; background: #fdfdfd; }
.zone-box button { display: flex; align-items: center; justify-content: space-between; width: 100%; height: 23px; padding: 0 9px 0 6px; border: 1px solid #b5b5b5; background: #fff; }
.defer { display: flex; align-items: center; justify-content: space-between; margin: 20px 0 0 3px; }
.defer button { width: 35px; height: 26px; background: #f8f8f8; color: #aaa; }

.status { display: flex; align-items: center; height: 22px; padding-left: 7px; gap: 18px; background: #f1f1f1; border-top: 1px solid #c6c6c6; }
.status > span { padding-bottom: 3px; }
.views { display: flex; margin-left: auto; height: 21px; }
.views button { width: 37px; display: flex; align-items: center; justify-content: center; }
.zoom { display: flex; align-items: center; width: 188px; gap: 5px; margin-left: -13px; padding-bottom: 1px; }
.zoom b { width: 8px; font-size: 14px; line-height: 14px; text-align: center; }
.zoom-track { width: 99px; height: 1px; background: #aaa; display: flex; align-items: center; justify-content: center; padding-right: 20px; }
.zoom-track i { width: 4px; height: 11px; background: #666; flex: none; }
.zoom span { padding-left: 8px; }

.mark { position: absolute; right: 6px; bottom: 8px; display: flex; gap: 2px; opacity: .8; pointer-events: none; }
.mark-name { margin-bottom: 3px; font-size: 21px; line-height: 22px; font-weight: bold; color: #4a90d0; white-space: nowrap; }
.mark-url { font: bold 17px/18px "Liberation Sans", sans-serif; color: #5fbf7c; }
</style>
